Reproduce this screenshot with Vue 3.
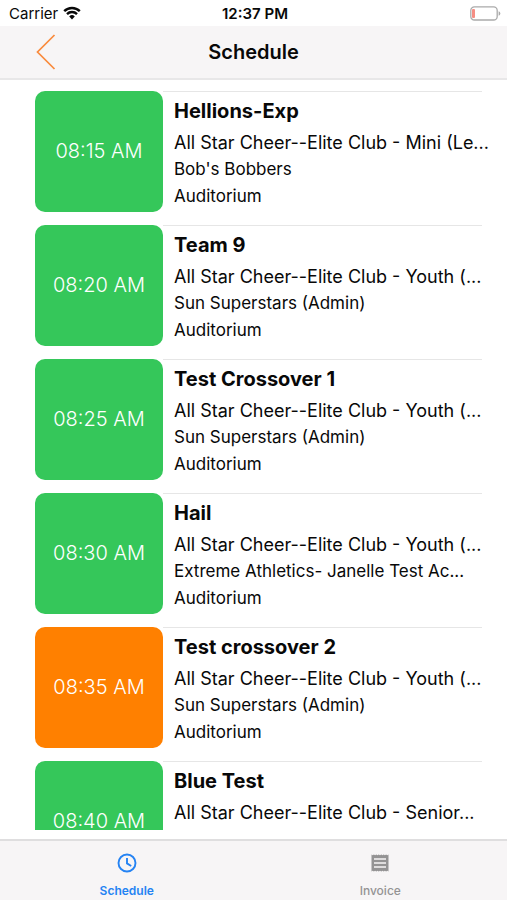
<script setup>
import { ref } from 'vue'

const tab = ref('schedule')
const venue = 'Auditorium'
const events = [
  { time: '08:15 AM', team: 'Hellions-Exp', division: 'All Star Cheer--Elite Club - Mini (Le...', gym: "Bob's Bobbers" },
  { time: '08:20 AM', team: 'Team 9', division: 'All Star Cheer--Elite Club - Youth (...', gym: 'Sun Superstars (Admin)' },
  { time: '08:25 AM', team: 'Test Crossover 1', division: 'All Star Cheer--Elite Club - Youth (...', gym: 'Sun Superstars (Admin)' },
  { time: '08:30 AM', team: 'Hail', division: 'All Star Cheer--Elite Club - Youth (...', gym: 'Extreme Athletics- Janelle Test Ac...' },
  { time: '08:35 AM', team: 'Test crossover 2', division: 'All Star Cheer--Elite Club - Youth (...', gym: 'Sun Superstars (Admin)', crossover: true },
  { time: '08:40 AM', team: 'Blue Test', division: 'All Star Cheer--Elite Club - Senior...', gym: '' }
]
</script>

<template>
  <div class="screen">
    <div class="status">
      <div class="carrier">
        <span>Carrier</span>
        <svg class="wifi" viewBox="0 0 18 14" aria-hidden="true">
          <path d="M1.2 5.2a11 11 0 0 1 15.6 0" />
          <path d="M4 8.1a7.1 7.1 0 0 1 10 0" />
          <path class="dot" d="M6.2 10.4a4 4 0 0 1 5.6 0L9 13.4z" />
        </svg>
      </div>
      <span class="clock">12:37 PM</span>
      <svg class="battery" viewBox="0 0 31 15" aria-hidden="true">
        <rect class="case" x="0.8" y="0.8" width="26.4" height="13.2" rx="3.6" />
        <rect class="charge" x="2" y="3" width="3" height="9" rx="1" />
        <path class="tip" d="M28.6 5.2a2.4 2.4 0 0 1 0 4.6z" />
      </svg>
    </div>

    <header class="navbar">
      <button class="back" type="button" aria-label="Back">
        <svg viewBox="0 0 20 36" aria-hidden="true"><path d="M18.5 1 1.5 18l17 17" /></svg>
      </button>
      <h1>Schedule</h1>
    </header>

    <main class="content">
      <ul class="list">
        <li v-for="event in events" :key="event.time" class="event">
          <div class="time" :class="{ crossover: event.crossover }">{{ event.time }}</div>
          <div class="details">
            <h2>{{ event.team }}</h2>
            <p class="division">{{ event.division }}</p>
            <p>{{ event.gym }}</p>
            <p v-if="event.gym">{{ venue }}</p>
          </div>
        </li>
      </ul>
    </main>

    <nav class="tabs">
      <button type="button" :class="{ active: tab === 'schedule' }" @click="tab = 'schedule'">
        <svg viewBox="0 0 20 20" aria-hidden="true">
          <circle class="line" cx="10" cy="10" r="8.5" />
          <path class="line" d="M10 5v5.4l4.2 2.6" />
        </svg>
        <span>Schedule</span>
      </button>
      <button type="button" :class="{ active: tab === 'invoice' }" @click="tab = 'invoice'">
        <svg viewBox="0 0 20 20" aria-hidden="true">
          <path class="solid" fill-rule="evenodd" d="M1.5 1.5l1.2 .8 1.2-.8 1.2 .8 1.2-.8 1.2 .8 1.2-.8 1.3 .8 1.3-.8 1.2 .8 1.2-.8 1.2 .8 1.2-.8 1.2 .8 1.2-.8v17l-1.2-.8-1.2 .8-1.2-.8-1.2 .8-1.2-.8-1.2 .8-1.3-.8-1.3 .8-1.2-.8-1.2 .8-1.2-.8-1.2 .8-1.2-.8-1.2 .8zM4 5.2v1.6h12V5.2zM4 9.2v1.6h12V9.2zM4 13.2v1.6h12v-1.6z" />
        </svg>
        <span>Invoice</span>
      </button>
    </nav>
  </div>
</template>

<style>
body {
  background: #fff;
}
</style>

<style scoped>
.screen {
  height: 100vh;
  display: flex;
  flex-direction: column;
  background: #fff;
  color: #080808;
  font-family: Inter, "Liberation Sans", sans-serif;
}

button {
  border: 0;
  padding: 0;
  background: none;
  font: inherit;
  cursor: pointer;
}

.status {
  flex: none;
  height: 26px;
  padding: 0 6px 0 9px;
  display: grid;
  grid-template-columns: 1fr auto 1fr;
  align-items: center;
  font-size: 15px;
}

.carrier {
  display: flex;
  align-items: center;
  gap: 5px;
}

.wifi {
  width: 18px;
  height: 14px;
  fill: none;
  stroke: #080808;
  stroke-width: 2.4;
}

.wifi .dot {
  fill: #080808;
  stroke: none;
}

.clock {
  font-weight: 600;
}

.battery {
  width: 31px;
  height: 15px;
  justify-self: end;
}

.case {
  fill: #fff;
  stroke: #aaa;
  stroke-width: 1.3;
}

.charge {
  fill: #f58e84;
}

.tip {
  fill: #aaa;
}

.navbar {
  flex: none;
  height: 54px;
  box-sizing: border-box;
  padding: 0 36px;
  display: grid;
  grid-template-columns: 1fr auto 1fr;
  align-items: center;
  background: #f7f5f6;
  border-bottom: 2px solid #e8e7e8;
}

.back {
  justify-self: start;
  display: flex;
}

.back svg {
  width: 20px;
  height: 36px;
  fill: none;
  stroke: #f98a3c;
  stroke-width: 1.7;
}

h1 {
  margin: 0;
  font-size: 20px;
  font-weight: 600;
}

.content {
  flex: 1;
  min-height: 0;
  overflow: hidden;
  padding: 11px 25px 0 35px;
  margin-bottom: 9px;
}

.list {
  margin: 0;
  padding: 0;
  list-style: none;
}

.event {
  display: flex;
  padding-bottom: 13px;
}

.time {
  flex: none;
  width: 128px;
  height: 121px;
  border-radius: 10px;
  display: flex;
  align-items: center;
  justify-content: center;
  background: #35c75a;
  color: #fff;
  font-size: 20px;
  line-height: 25px;
  font-weight: 300;
}

.time.crossover {
  background: #ff8000;
}

.details {
  flex: 1;
  min-width: 0;
  border-top: 1px solid #e6e6e6;
  padding-left: 11px;
}

h2,
p {
  margin: 0;
  white-space: nowrap;
}

h2 {
  padding: 3px 0 2px;
  font-size: 20px;
  line-height: 32px;
  font-weight: 700;
}

p {
  font-size: 17px;
  line-height: 27px;
}

.division {
  font-size: 18px;
}

.tabs {
  flex: none;
  height: 61px;
  box-sizing: border-box;
  display: flex;
  background: #f7f5f6;
  border-top: 2px solid #dfdedf;
}

.tabs button {
  flex: 1;
  display: flex;
  flex-direction: column;
  align-items: center;
  gap: 10px;
  padding-top: 12px;
  color: #949394;
  font-size: 12px;
  line-height: 15px;
  font-weight: 500;
}

.tabs button.active {
  color: #2583f3;
  font-weight: 600;
}

.tabs svg {
  width: 20px;
  height: 20px;
}

.line {
  fill: none;
  stroke: currentColor;
  stroke-width: 1.9;
}

.solid {
  fill: currentColor;
}
</style>
